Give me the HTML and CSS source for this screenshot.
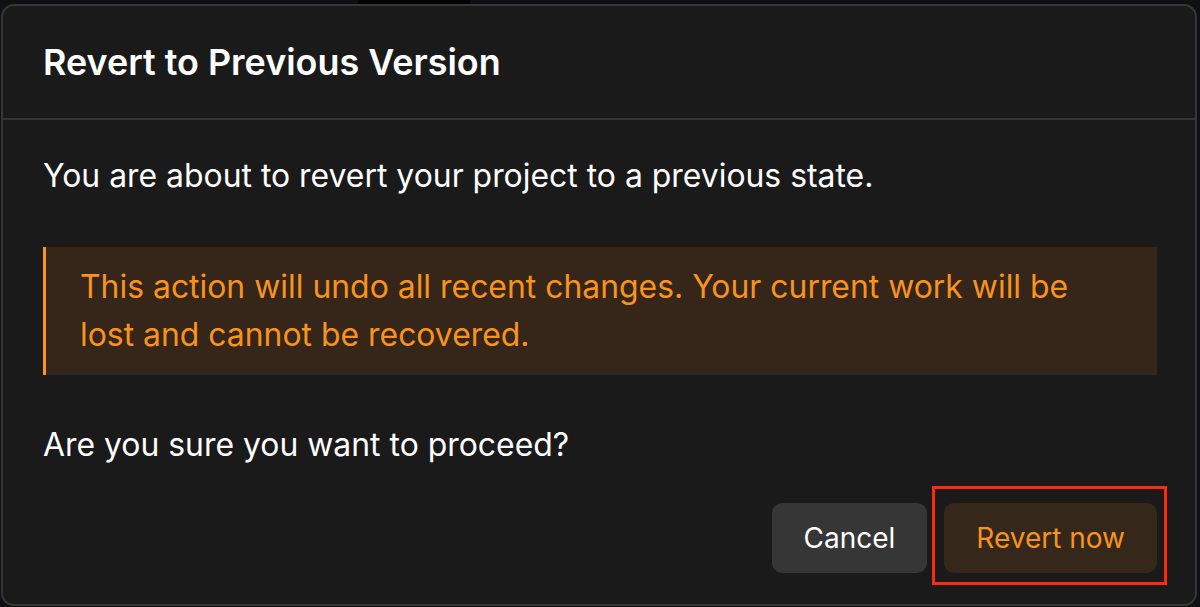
FILE: index.html
```html
<!DOCTYPE html>
<html lang="en">

<head>
    <meta charset="UTF-8">
    <title>Revert to Previous Version</title>
    <link rel="stylesheet" href="styles.css">
</head>

<body>
<div class="topNotch"></div>
<div class="dialog">
    <div class="dialogHeader">
        <h1>Revert to Previous Version</h1>
    </div>
    <div class="dialogBody">
        <p class="lead">You are about to revert your project to a previous state.</p>

        <div class="warning">
            This action will undo all recent changes. Your current work will be<br>
            lost and cannot be recovered.
        </div>

        <p class="question">Are you sure you want to proceed?</p>

        <div class="actions">
            <div class="button cancel">Cancel</div>
            <div class="button revert">Revert now</div>
        </div>
    </div>
</div>
</body>
</html>
```

FILE: styles.css
```css
* {
    margin: 0;
    padding: 0;
    box-sizing: border-box;
}

html {
    height: 100%;
    width: 100%;
    overflow: hidden;
}

body {
    height: 100%;
    background-color: #0e1013;
    font-family: Inter, "Liberation Sans", sans-serif;
    position: relative;
}

.topNotch {
    position: absolute;
    left: 358px;
    top: 0;
    width: 112px;
    height: 4px;
    background-color: #000000;
}

.dialog {
    margin: 4px 3px 0 1px;
    height: 602px;
    border: 2px solid #363636;
    border-radius: 13px;
    background-color: #1a1a1a;
    display: flex;
    flex-direction: column;
}

.dialogHeader {
    height: 114px;
    padding: 0 40px;
    display: flex;
    align-items: center;
    border-bottom: 2px solid #353535;
}

h1 {
    color: #ffffff;
    font-size: 35.9px;
    font-weight: 600;
}

.dialogBody {
    padding: 40px 38px 0 40px;
}

p {
    color: #ffffff;
    font-size: 31.9px;
    line-height: 32px;
}

.warning {
    margin-top: 55px;
    background-color: #352619;
    border-left: 3px solid #f7931e;
    color: #f7931e;
    font-size: 31.9px;
    line-height: 48px;
    padding: 16px 34px;
}

.question {
    margin-top: 54px;
}

.actions {
    margin-top: 42px;
    display: flex;
    justify-content: flex-end;
    gap: 17px;
}

.button {
    height: 70px;
    padding: 0 32px;
    border-radius: 10px;
    font-size: 28px;
    display: flex;
    align-items: center;
    justify-content: center;
}

.cancel {
    background-color: #363636;
    color: #ffffff;
}

.revert {
    background-color: #36271b;
    color: #f7931e;
    position: relative;
}

/* highlight box drawn round the primary action */
.revert::after {
    content: "";
    position: absolute;
    left: -12px;
    right: -10px;
    top: -17px;
    bottom: -12px;
    border: 3px solid #ff2a0a;
}
```
